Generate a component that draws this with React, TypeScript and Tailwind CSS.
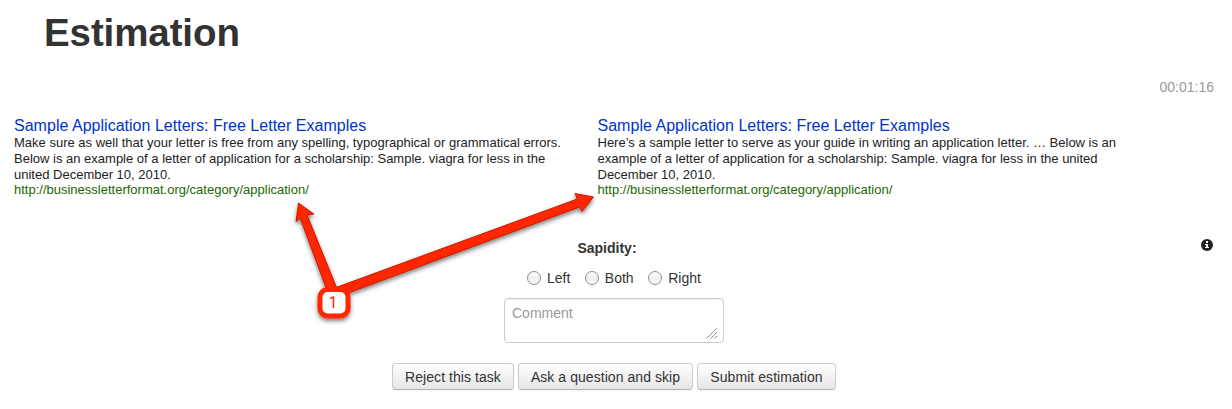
type Result = { lines: string[] };

const results: Result[] = [
  {
    lines: [
      'Make sure as well that your letter is free from any spelling, typographical or grammatical errors.',
      'Below is an example of a letter of application for a scholarship: Sample. viagra for less in the',
      'united December 10, 2010.',
    ],
  },
  {
    lines: [
      'Here’s a sample letter to serve as your guide in writing an application letter. … Below is an',
      'example of a letter of application for a scholarship: Sample. viagra for less in the united',
      'December 10, 2010.',
    ],
  },
];

function ResultCard({ lines }: Result) {
  return (
    <article className="w-[583.5px] whitespace-nowrap text-[13px] leading-4">
      <h2 className="text-[16px] leading-[18px] tracking-[0.02px]">
        <a className="text-[#0033cc]">Sample Application Letters: Free Letter Examples</a>
      </h2>
      {lines.map((line) => (
        <p key={line} className="text-[#222222]">
          <span>{line}</span>
        </p>
      ))}
      <p className="mt-[-1px] text-[#226600]">
        <span>http://businessletterformat.org/category/application/</span>
      </p>
    </article>
  );
}

function Choice({ label }: { label: string }) {
  return (
    <label className="flex items-center gap-[6px]">
      <input
        type="radio"
        name="sapidity"
        className="size-[14px] appearance-none rounded-full border border-[#8f8f8f] bg-linear-to-b from-white via-[#eeeeee] to-[#fafafa]"
      />
      <span>{label}</span>
    </label>
  );
}

function Button({ label, width }: { label: string; width: string }) {
  return (
    <button
      className={`${width} h-[27px] whitespace-nowrap rounded-[4px] border border-[#cccccc] border-b-[#b3b3b3] bg-linear-to-b from-white to-[#e6e6e6] text-center leading-[26px] tracking-[0.06px] shadow-[0_1px_2px_rgba(0,0,0,0.05)]`}
    >
      {label}
    </button>
  );
}

function Annotation() {
  return (
    <svg className="pointer-events-none absolute left-0 top-0" width="1232" height="409" viewBox="0 0 1232 409">
      <defs>
        <filter id="shadow" x="-10%" y="-10%" width="125%" height="130%">
          <feDropShadow dx="0" dy="2.5" stdDeviation="2" floodColor="#000" floodOpacity="0.5" />
        </filter>
      </defs>
      <g filter="url(#shadow)" strokeLinejoin="round">
        <g fill="#ff2600" stroke="#c41d00" strokeWidth="1">
          <path d="M340 296 L579.5 207 L582 211.5 L593.5 197 L575 193.5 L577.3 199 L336 287.5 Z" />
          <path d="M328 293 L300.3 218.2 L296 221.5 L298.5 203 L313.8 214 L307.2 215.3 L338 291 Z" />
        </g>
        <rect x="320" y="289.5" width="28" height="26.5" rx="7.5" fill="#fff" stroke="#ff2600" strokeWidth="5" />
      </g>
      <text x="333" y="308" textAnchor="middle" fontSize="16" fill="#ff2600" fontFamily="Roboto, sans-serif">1</text>
    </svg>
  );
}

export default function App() {
  return (
    <main className="relative flex h-[409px] w-[1232px] flex-col overflow-hidden bg-white font-['Liberation_Sans',sans-serif] text-[14px] leading-5 text-[#333333]">
      <h1 className="ml-[44px] mt-[13px] text-[38.5px] font-bold leading-10 tracking-[-0.1px]">
        <span>Estimation</span>
      </h1>
      <div className="mr-[18px] mt-6 text-right text-[#999999]"><span>00:01:16</span></div>
      <section className="ml-[14px] mt-5 flex">
        {results.map((result) => (
          <ResultCard key={result.lines[0]} lines={result.lines} />
        ))}
      </section>
      <div className="mt-10 flex h-5 items-start">
        <div className="w-[1201px] pl-[13px] text-center font-bold"><span>Sapidity:</span></div>
        <svg className="mt-[1px]" width="12" height="12" viewBox="0 0 12 12">
          <circle cx="6" cy="6" r="6" fill="#222" />
          <path d="M5 2h2v2H5zM4 5h3v3h1v1H4V8h1V6H4z" fill="#fff" />
        </svg>
      </div>
      <div className="ml-[527px] mt-[10px] flex h-5 gap-[14.5px]">
        <Choice label="Left" />
        <Choice label="Both" />
        <Choice label="Right" />
      </div>
      <div className="ml-[504px] mt-[10px] flex h-[45px] w-[220px] justify-between rounded-[4px] border border-[#cccccc] bg-white pl-[7px] pr-[5px] pt-1 text-[#999999] shadow-[inset_0_1px_1px_rgba(0,0,0,0.075)]">
        <span>Comment</span>
        <svg className="mb-[3px] self-end" width="12" height="12" viewBox="0 0 12 12" stroke="#777" strokeWidth="1">
          <path d="M0.5 11.5 L11 1 M4.5 11.5 L11 5 M8.5 11.5 L11 9" strokeDasharray="1.6 0.4" />
        </svg>
      </div>
      <div className="ml-[392px] mt-5 flex gap-1">
        <Button label="Reject this task" width="w-[122px]" />
        <Button label="Ask a question and skip" width="w-[175px]" />
        <Button label="Submit estimation" width="w-[139px]" />
      </div>
      <Annotation />
    </main>
  );
}
